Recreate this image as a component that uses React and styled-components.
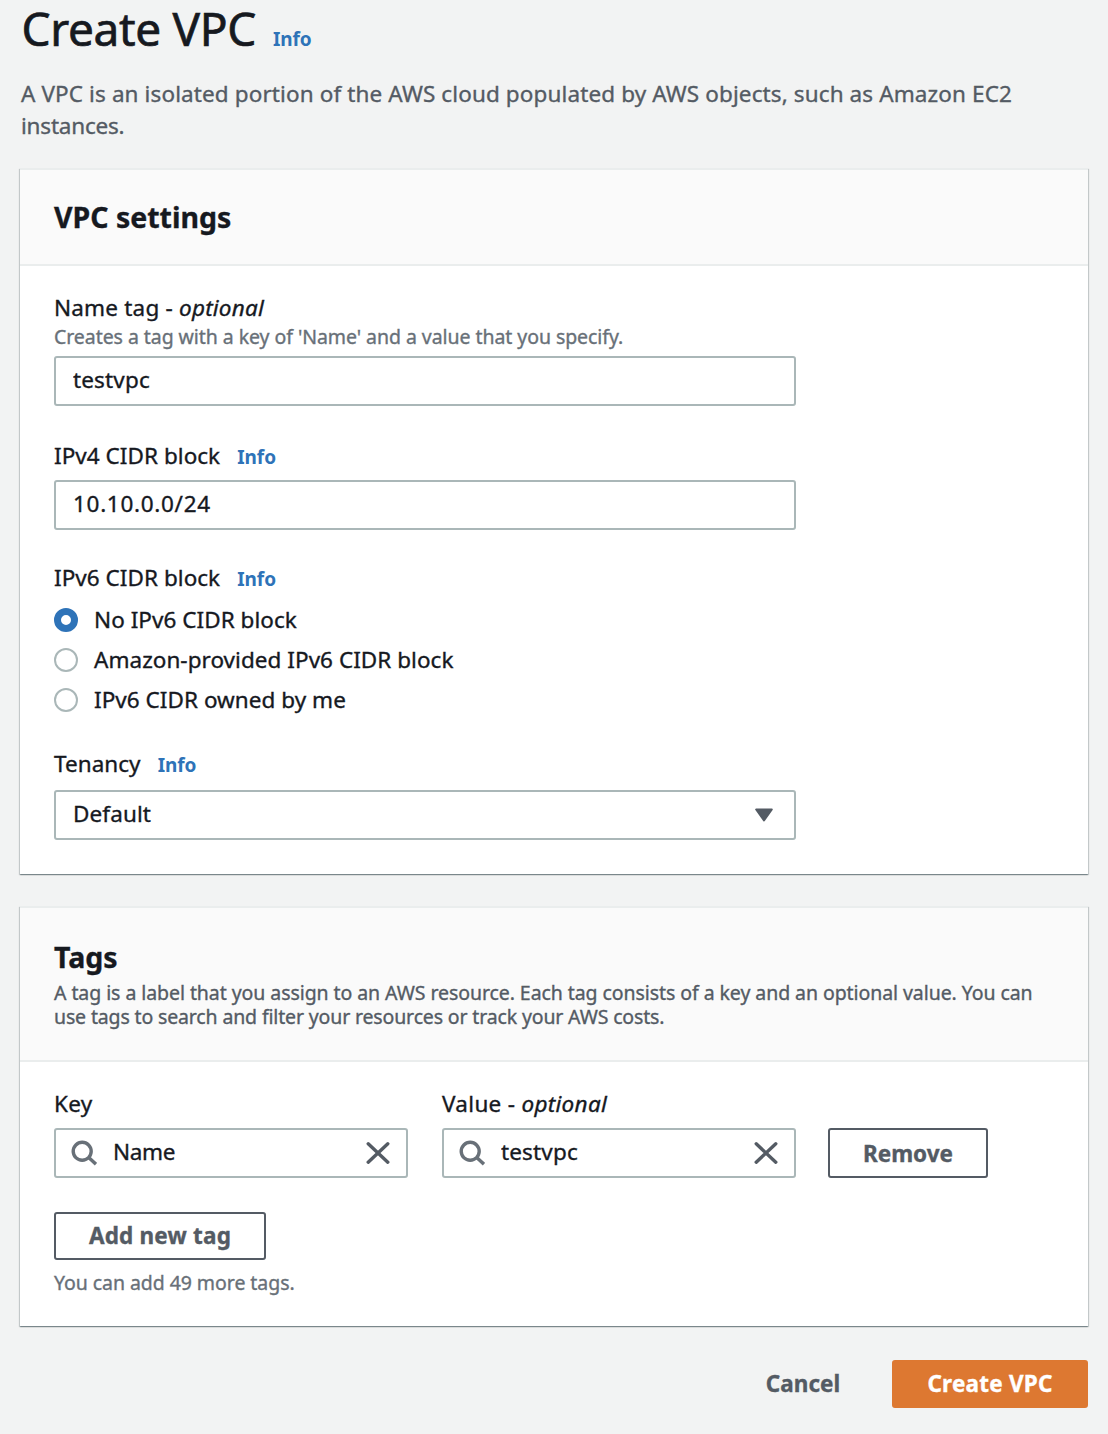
import React from "react";
import styled, { createGlobalStyle } from "styled-components";

const color = {
  page: "#f2f3f3",
  text: "#16191f",
  muted: "#545b64",
  hint: "#687078",
  link: "#2e73b8",
  control: "#aab7b8",
  divider: "#eaeded",
  primary: "#dd7831",
};

const GlobalStyle = createGlobalStyle`
  * { box-sizing: border-box; }
  body { margin: 0; background: ${color.page}; color: ${color.text}; -webkit-text-stroke: 0.35px; }
  body, input, button { font-family: "Noto Sans", "Open Sans", sans-serif; }
  h1, h2, p, fieldset, legend { margin: 0; padding: 0; border: 0; }
`;

const Page = styled.main`
  display: flex;
  flex-direction: column;
  height: 1434px;
  padding: 0 20px;
`;

const TitleRow = styled.header`
  display: flex;
  align-items: baseline;
  gap: 17px;
  padding-left: 1.5px;
`;

const Title = styled.h1`
  font-size: 46px;
  font-weight: 400;
  line-height: 56px;
  letter-spacing: -0.35px;
  -webkit-text-stroke: 0.7px;
`;

const InfoLink = styled.a`
  color: ${color.link};
  font-size: 19px;
  font-weight: 700;
  line-height: 24px;
  letter-spacing: -0.05px;
  -webkit-text-stroke: 0;
`;

const Intro = styled.p`
  margin: 22px 0 26px 1px;
  color: ${color.muted};
  font-size: 22.5px;
  line-height: 32px;
  white-space: nowrap;
`;

const Line = styled.span`
  display: block;
  letter-spacing: ${(p) => p.$track || 0}px;
`;

const Card = styled.section`
  margin-bottom: ${(p) => p.$after}px;
  background: #fff;
  border-top: 2px solid ${color.divider};
  box-shadow: 0 1px 1px 0 rgba(0, 28, 36, 0.3), 1px 1px 1px 0 rgba(0, 28, 36, 0.15),
    -1px 1px 1px 0 rgba(0, 28, 36, 0.15);
`;

const CardHeader = styled.div`
  padding: ${(p) => p.$pad};
  background: #fafafa;
  border-bottom: 2px solid ${color.divider};
`;

const CardTitle = styled.h2`
  font-size: 28.5px;
  font-weight: 700;
  line-height: 36px;
  letter-spacing: 0;
`;

const Small = styled.p`
  margin-top: ${(p) => p.$top || 0}px;
  color: ${(p) => (p.$strong ? color.muted : color.hint)};
  font-size: 19.5px;
  line-height: 24px;
  letter-spacing: -0.06px;
  white-space: nowrap;
`;

const CardBody = styled.div`
  display: flex;
  flex-direction: column;
  align-items: flex-start;
  padding: ${(p) => p.$pad};
`;

const Field = styled.div`
  width: ${(p) => p.$width || 742}px;
  margin-bottom: ${(p) => p.$after || 0}px;
`;

const LabelRow = styled.div`
  display: flex;
  align-items: baseline;
  gap: 17px;
  height: 32px;
  margin-bottom: ${(p) => p.$after || 0}px;
`;

const Label = styled.label`
  font-size: 22.5px;
  line-height: 32px;
  letter-spacing: ${(p) => p.$track ?? 0.04}px;
  white-space: pre;
`;

const Control = styled.div`
  display: flex;
  align-items: center;
  height: 50px;
  margin-top: ${(p) => p.$top || 0}px;
  padding: 0 16px 0 ${(p) => p.$left || 17}px;
  background: #fff;
  border: 2px solid ${color.control};
  border-radius: 3px;
`;

const TextInput = styled.input`
  flex: 1;
  min-width: 0;
  height: 46px;
  padding: 0 0 3px ${(p) => p.$indent || 0}px;
  border: 0;
  outline: 0;
  background: transparent;
  color: ${color.text};
  font-size: 22.5px;
  letter-spacing: ${(p) => p.$track ?? 0.15}px;
  -webkit-text-stroke: 0.35px;
`;

const SelectValue = styled.span`
  flex: 1;
  padding-bottom: 3px;
  font-size: 22.5px;
  line-height: 32px;
  letter-spacing: 0.1px;
`;

const RadioOption = styled.label`
  display: flex;
  align-items: center;
  gap: 16px;
  height: 40px;
  font-size: 22.5px;
  line-height: 32px;
  letter-spacing: 0.04px;
`;

const Radio = styled.input.attrs({ type: "radio" })`
  appearance: none;
  width: 24px;
  height: 24px;
  margin: 0;
  background: #fff;
  border: 2px solid ${color.control};
  border-radius: 50%;

  &:checked {
    border: 7px solid ${color.link};
  }
`;

const TagRow = styled.div`
  display: flex;
  align-items: flex-end;
  margin-bottom: 34px;
  gap: 34px;
`;

const Button = styled.button`
  width: ${(p) => p.$width}px;
  height: ${(p) => p.$height || 48}px;
  margin-left: ${(p) => p.$shift || 0}px;
  padding: ${(p) => p.$drop || 0}px 0 0;
  border: 2px solid
    ${(p) => (p.$kind === "primary" ? color.primary : p.$kind === "link" ? "transparent" : color.muted)};
  border-radius: 3px;
  background: ${(p) => (p.$kind === "primary" ? color.primary : p.$kind === "link" ? "transparent" : "#fff")};
  color: ${(p) => (p.$kind === "primary" ? "#fff" : color.muted)};
  font-size: 22.5px;
  font-weight: 700;
  line-height: 32px;
  letter-spacing: ${(p) => p.$track ?? 0.2}px;
`;

const Footer = styled.footer`
  display: flex;
  justify-content: flex-end;
  gap: 16px;
`;

const Icon = styled.svg`
  flex: none;
  display: block;
`;

const SearchIcon = () => (
  <Icon width="26" height="26" viewBox="0 0 26 26" fill="none" stroke={color.hint} strokeWidth="3.4">
    <circle cx="11.2" cy="11.3" r="9" />
    <path d="M17.4 17.2 L25 24.2" />
  </Icon>
);

const ClearIcon = () => (
  <Icon width="24" height="24" viewBox="0 0 24 24" fill="none" stroke={color.muted} strokeWidth="3.4" strokeLinecap="round">
    <path d="M2.2 2.8 L21.8 21.2 M21.8 2.8 L2.2 21.2" />
  </Icon>
);

const CaretIcon = () => (
  <Icon width="18" height="14" viewBox="0 0 18 14" fill={color.muted} stroke={color.muted} strokeWidth="2" strokeLinejoin="round">
    <path d="M1.2 1.5 H16.8 L9 12.5 Z" />
  </Icon>
);

const ControlTail = styled.span`
  display: flex;
  margin-right: 5px;
`;

const SearchField = ({ id, value, track, left }) => (
  <Control $left={left}>
    <SearchIcon />
    <TextInput id={id} defaultValue={value} $indent={31 - left} $track={track} />
    <ClearIcon />
  </Control>
);

const ipv6Options = ["No IPv6 CIDR block", "Amazon-provided IPv6 CIDR block", "IPv6 CIDR owned by me"];

export default function App() {
  return (
    <>
      <GlobalStyle />
      <Page>
        <TitleRow>
          <Title>Create VPC</Title>
          <InfoLink>Info</InfoLink>
        </TitleRow>
        <Intro>
          <Line $track={0.115}>
            A VPC is an isolated portion of the AWS cloud populated by AWS objects, such as Amazon EC2
          </Line>
          <Line $track={-0.2}>instances.</Line>
        </Intro>

        <Card $after={32}>
          <CardHeader $pad="29px 34px">
            <CardTitle>VPC settings</CardTitle>
          </CardHeader>
          <CardBody $pad="26px 34px 34px">
            <Field $after={34}>
              <LabelRow>
                <Label htmlFor="name" $track={0.2}>
                  Name tag - <em>optional</em>
                </Label>
              </LabelRow>
              <Small $top={1}>Creates a tag with a key of 'Name' and a value that you specify.</Small>
              <Control $top={7}>
                <TextInput id="name" defaultValue="testvpc" />
              </Control>
            </Field>
            <Field $after={32}>
              <LabelRow $after={8}>
                <Label htmlFor="ipv4">IPv4 CIDR block</Label>
                <InfoLink>Info</InfoLink>
              </LabelRow>
              <Control>
                <TextInput id="ipv4" defaultValue="10.10.0.0/24" $track={0.7} />
              </Control>
            </Field>
            <Field as="fieldset" $after={28}>
              <LabelRow $after={6}>
                <Label as="span">IPv6 CIDR block</Label>
                <InfoLink>Info</InfoLink>
              </LabelRow>
              {ipv6Options.map((option, i) => (
                <RadioOption key={option}>
                  <Radio name="ipv6" defaultChecked={i === 0} />
                  {option}
                </RadioOption>
              ))}
            </Field>
            <Field>
              <LabelRow $after={10}>
                <Label as="span">Tenancy</Label>
                <InfoLink>Info</InfoLink>
              </LabelRow>
              <Control>
                <SelectValue>Default</SelectValue>
                <ControlTail>
                  <CaretIcon />
                </ControlTail>
              </Control>
            </Field>
          </CardBody>
        </Card>

        <Card $after={34}>
          <CardHeader $pad="31px 34px">
            <CardTitle>Tags</CardTitle>
            <Small $strong $top={6}>
              <Line $track={-0.07}>
                A tag is a label that you assign to an AWS resource. Each tag consists of a key and an optional value. You can
              </Line>
              <Line $track={-0.145}>use tags to search and filter your resources or track your AWS costs.</Line>
            </Small>
          </CardHeader>
          <CardBody $pad="26px 34px 31px">
            <TagRow>
              <Field $width={354}>
                <LabelRow $after={8}>
                  <Label htmlFor="key" $track={0.3}>Key</Label>
                </LabelRow>
                <SearchField id="key" value="Name" track={-0.3} left={15} />
              </Field>
              <Field $width={354}>
                <LabelRow $after={8}>
                  <Label htmlFor="value" $track={0.3}>
                    Value - <em>optional</em>
                  </Label>
                </LabelRow>
                <SearchField id="value" value="testvpc" left={14.5} />
              </Field>
              <Button $width={160} $height={50} $shift={-2} $drop={2} $track={0}>Remove</Button>
            </TagRow>
            <Button $width={212}>Add new tag</Button>
            <Small $top={11}>You can add 49 more tags.</Small>
          </CardBody>
        </Card>

        <Footer>
          <Button $kind="link" $width={146} $track={0}>Cancel</Button>
          <Button $kind="primary" $width={196}>Create VPC</Button>
        </Footer>
      </Page>
    </>
  );
}
